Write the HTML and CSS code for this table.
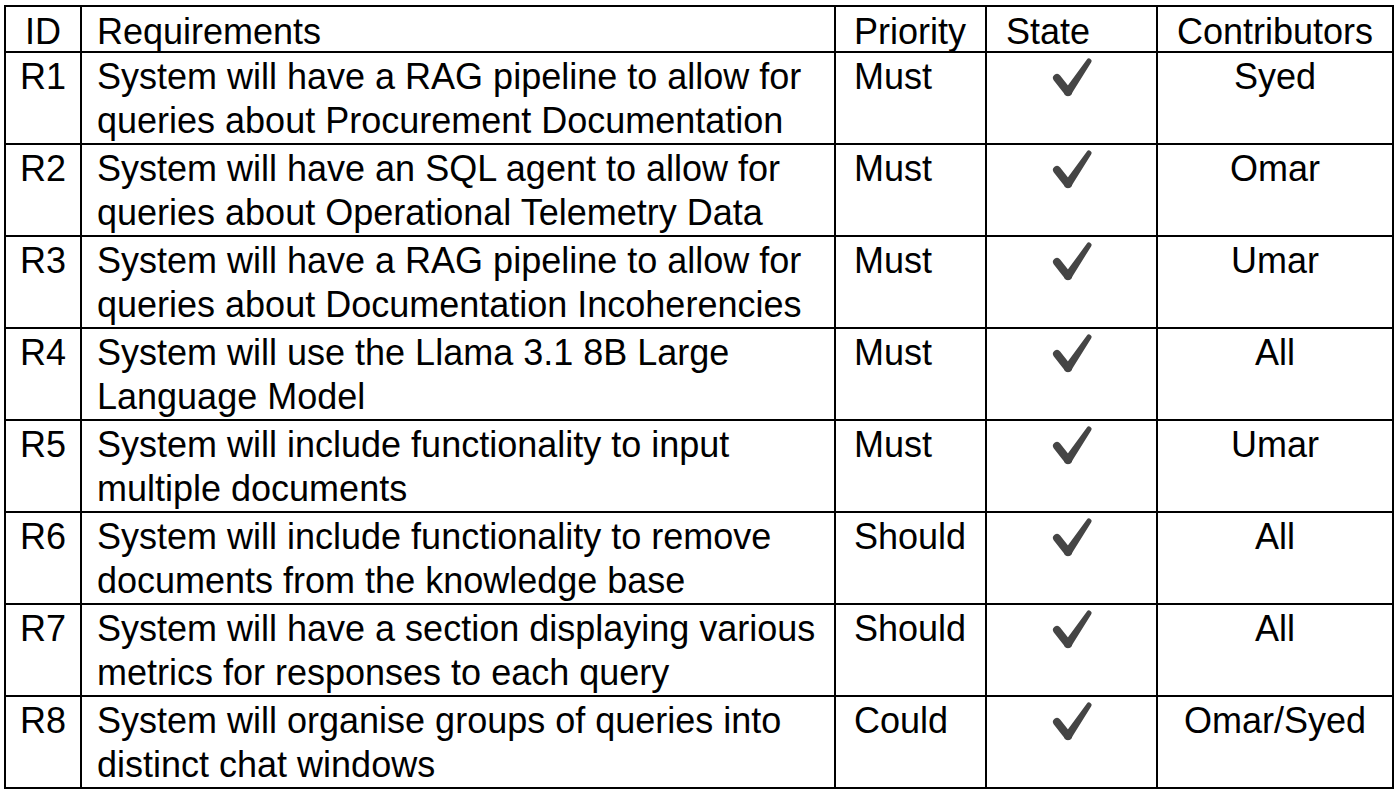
FILE: index.html
```html
<!DOCTYPE html>
<html lang="en">
<head>
<meta charset="utf-8">
<title>Requirements</title>
<link rel="stylesheet" href="styles.css">
</head>
<body>
<div class="req-table" role="table">
  <div class="cell head id" role="columnheader">ID</div>
  <div class="cell head req" role="columnheader">Requirements</div>
  <div class="cell head pri" role="columnheader">Priority</div>
  <div class="cell head state" role="columnheader">State</div>
  <div class="cell head contrib" role="columnheader">Contributors</div>

  <div class="cell id">R1</div>
  <div class="cell req">System will have a RAG pipeline to allow for<br>queries about Procurement Documentation</div>
  <div class="cell pri">Must</div>
  <div class="cell check"><svg class="tick" viewBox="0 0 40 40"><use href="#tick"/></svg></div>
  <div class="cell contrib">Syed</div>

  <div class="cell id">R2</div>
  <div class="cell req">System will have an SQL agent to allow for<br>queries about Operational Telemetry Data</div>
  <div class="cell pri">Must</div>
  <div class="cell check"><svg class="tick" viewBox="0 0 40 40"><use href="#tick"/></svg></div>
  <div class="cell contrib">Omar</div>

  <div class="cell id">R3</div>
  <div class="cell req">System will have a RAG pipeline to allow for<br>queries about Documentation Incoherencies</div>
  <div class="cell pri">Must</div>
  <div class="cell check"><svg class="tick" viewBox="0 0 40 40"><use href="#tick"/></svg></div>
  <div class="cell contrib">Umar</div>

  <div class="cell id">R4</div>
  <div class="cell req">System will use the Llama 3.1 8B Large<br>Language Model</div>
  <div class="cell pri">Must</div>
  <div class="cell check"><svg class="tick" viewBox="0 0 40 40"><use href="#tick"/></svg></div>
  <div class="cell contrib">All</div>

  <div class="cell id">R5</div>
  <div class="cell req">System will include functionality to input<br>multiple documents</div>
  <div class="cell pri">Must</div>
  <div class="cell check"><svg class="tick" viewBox="0 0 40 40"><use href="#tick"/></svg></div>
  <div class="cell contrib">Umar</div>

  <div class="cell id">R6</div>
  <div class="cell req">System will include functionality to remove<br>documents from the knowledge base</div>
  <div class="cell pri">Should</div>
  <div class="cell check"><svg class="tick" viewBox="0 0 40 40"><use href="#tick"/></svg></div>
  <div class="cell contrib">All</div>

  <div class="cell id">R7</div>
  <div class="cell req">System will have a section displaying various<br>metrics for responses to each query</div>
  <div class="cell pri">Should</div>
  <div class="cell check"><svg class="tick" viewBox="0 0 40 40"><use href="#tick"/></svg></div>
  <div class="cell contrib">All</div>

  <div class="cell id">R8</div>
  <div class="cell req">System will organise groups of queries into<br>distinct chat windows</div>
  <div class="cell pri">Could</div>
  <div class="cell check"><svg class="tick" viewBox="0 0 40 40"><use href="#tick"/></svg></div>
  <div class="cell contrib">Omar/Syed</div>
</div>

<svg class="defs" width="0" height="0" aria-hidden="true">
  <defs>
    <g id="tick">
      <line x1="5" y1="21" x2="16" y2="35" stroke="#454545" stroke-width="8" stroke-linecap="round"/>
      <circle cx="16" cy="35" r="4" fill="#454545"/>
      <path d="M12.7 32.8 L34.9 2.6 A2.5 2.5 0 0 1 39.1 5.4 L19.3 37.2 Z" fill="#454545"/>
    </g>
  </defs>
</svg>
</body>
</html>
```

FILE: styles.css
```css
html, body {
  margin: 0;
  padding: 0;
  background: #ffffff;
}

body {
  padding: 5px 0 0 4px;
  font-family: "Liberation Sans", Arial, sans-serif;
  color: #000000;
}

.req-table {
  display: grid;
  grid-template-columns: 76px 754px 151px 171px 236px;
  grid-template-rows: 46px;
  grid-auto-rows: 92px;
  width: max-content;
  border-left: 2px solid #000;
  border-top: 2px solid #000;
}

.cell {
  box-sizing: border-box;
  border-right: 2px solid #000;
  border-bottom: 2px solid #000;
  font-size: 36px;
  line-height: 44px;
  padding-top: 2px;
  white-space: nowrap;
}

.cell.head {
  padding-top: 3px;
}

.id {
  text-align: center;
}

.req {
  padding-left: 15px;
}

.pri {
  padding-left: 18px;
}

.state {
  padding-left: 19px;
}

.contrib {
  text-align: center;
}

.check {
  display: flex;
  justify-content: center;
  align-items: flex-start;
  padding-top: 4px;
}

.tick {
  width: 40px;
  height: 40px;
  display: block;
}

.defs {
  position: absolute;
  width: 0;
  height: 0;
  overflow: hidden;
}
```
